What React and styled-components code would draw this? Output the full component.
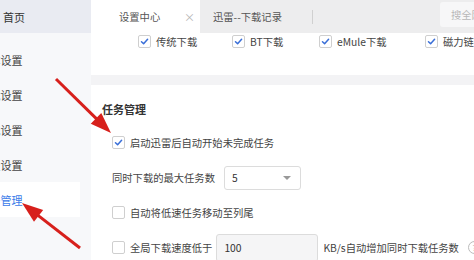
import React from 'react'
import styled, { createGlobalStyle } from 'styled-components'

const GlobalStyle = createGlobalStyle`
  html, body {
    margin: 0;
    padding: 0;
    width: 474px;
    height: 260px;
    overflow: hidden;
    background: #f3f3f5;
    font-family: "Noto Sans CJK SC", "Noto Sans", sans-serif;
  }
`

const Page = styled.div`
  position: relative;
  display: flex;
  width: 474px;
  height: 260px;
  overflow: hidden;
`

const Sidebar = styled.div`
  width: 91px;
  flex-shrink: 0;
  background: #f7f8fa;
  display: flex;
  flex-direction: column;
`

const HomeItem = styled.div`
  height: 33px;
  background: #e9ebf2;
  display: flex;
  align-items: center;
  padding-left: 3px;
  font-size: 11px;
  color: #333;
`

const NavList = styled.div`
  margin-top: 9px;
  display: flex;
  flex-direction: column;
`

const NavItem = styled.div`
  height: 35px;
  width: 80px;
  display: flex;
  align-items: center;
  overflow: hidden;
  background: ${({ active }) => (active ? '#ffffff' : 'transparent')};
  color: ${({ active }) => (active ? '#3b7be9' : '#444')};
  font-size: 11px;
  white-space: nowrap;

  span {
    margin-left: -21.5px;
  }
`

const Main = styled.div`
  flex: 1;
  display: flex;
  flex-direction: column;
  background: #f3f3f5;
`

const TabBar = styled.div`
  height: 33px;
  background: #ededee;
  display: flex;
  align-items: stretch;
  flex-shrink: 0;
`

const Tab = styled.div`
  display: flex;
  align-items: center;
  font-size: 10.3px;
  color: #555;
  background: ${({ active }) => (active ? '#ffffff' : 'transparent')};
  width: ${({ w }) => w}px;
  padding-left: ${({ pl }) => pl}px;
  box-sizing: border-box;
  position: relative;
`

const Close = styled.span`
  position: absolute;
  right: 5px;
  font-size: 11px;
  color: #b5b5b5;
`

const Divider = styled.div`
  width: 1px;
  height: 14px;
  background: #d0d0d0;
  align-self: center;
`

const Search = styled.div`
  margin-left: auto;
  margin-top: 2px;
  height: 25px;
  width: 30px;
  background: #f7f7f8;
  border-radius: 3px 0 0 3px;
  display: flex;
  align-items: center;
  padding-left: 11px;
  font-size: 10.3px;
  color: #b8b8b8;
  white-space: nowrap;
  overflow: hidden;
`

const TopCard = styled.div`
  background: #fff;
  height: 42px;
  flex-shrink: 0;
  position: relative;
`

const TypeOption = styled.label`
  display: flex;
  align-items: center;
  height: 12px;
  position: absolute;
  left: ${({ x }) => x - 91}px;
  top: 2px;
  font-size: 10.3px;
  color: #444;
  white-space: nowrap;
  gap: 5px;
`

const Card = styled.div`
  margin-top: 10px;
  background: #fff;
  flex: 1;
  padding: 17px 0 0 11px;
  box-sizing: border-box;
`

const Heading = styled.div`
  font-size: 11px;
  font-weight: 700;
  color: #333;
  height: 14px;
  line-height: 14px;
  margin-bottom: 9px;
`

const Row = styled.div`
  display: flex;
  align-items: center;
  height: 35px;
  padding-left: 10px;
  gap: 5px;
  font-size: 10.3px;
  color: #444;
  white-space: nowrap;
`

const Box = styled.span`
  width: 11px;
  height: 11px;
  border: 1px solid #cfcfcf;
  border-radius: 2px;
  background: #fff;
  display: inline-flex;
  align-items: center;
  justify-content: center;
  flex-shrink: 0;
`

const Select = styled.div`
  margin-left: 4px;
  width: 77px;
  height: 24px;
  border: 1px solid #dcdcdc;
  border-radius: 3px;
  box-sizing: border-box;
  display: flex;
  align-items: center;
  justify-content: space-between;
  padding: 0 9px 0 7px;
  color: #333;
`

const Caret = styled.span`
  width: 0;
  height: 0;
  border-left: 4px solid transparent;
  border-right: 4px solid transparent;
  border-top: 4px solid #999;
`

const Input = styled.div`
  margin-left: -1px;
  width: 102px;
  height: 28px;
  border: 1px solid #dcdcdc;
  border-radius: 3px;
  background: #f5f5f6;
  box-sizing: border-box;
  display: flex;
  align-items: center;
  padding-left: 7px;
  color: #333;
`

const Help = styled.span`
  margin-left: 4px;
  width: 11px;
  height: 11px;
  border: 1px solid #bbb;
  border-radius: 50%;
  font-size: 8px;
  color: #aaa;
  display: inline-flex;
  align-items: center;
  justify-content: center;
  flex-shrink: 0;
`

const Overlay = styled.svg`
  position: absolute;
  left: 0;
  top: 0;
  pointer-events: none;
`

function Check({ checked }) {
  return (
    <Box>
      {checked && (
        <svg width="9" height="9" viewBox="0 0 9 9">
          <path d="M1.5 4.8 L3.6 6.8 L7.6 2.2" fill="none" stroke="#3a6fd8" strokeWidth="1.5" strokeLinecap="round" strokeLinejoin="round" />
        </svg>
      )}
    </Box>
  )
}

// positions of the download type checkboxes, page x
const types = [
  { label: '传统下载', x: 138 },
  { label: 'BT下载', x: 232 },
  { label: 'eMule下载', x: 319 },
  { label: '磁力链接', x: 425 },
]

const navs = ['基本设置', '下载设置', '常规设置', '高级设置', '任务管理']

function Arrow({ x1, y1, x2, y2 }) {
  const dx = x2 - x1
  const dy = y2 - y1
  const len = Math.hypot(dx, dy)
  const ux = dx / len
  const uy = dy / len
  const bx = x2 - ux * 21
  const by = y2 - uy * 21
  const px = -uy * 7.5
  const py = ux * 7.5
  return (
    <g>
      <line x1={x1} y1={y1} x2={bx + ux * 4} y2={by + uy * 4} stroke="#d7201c" strokeWidth="3" />
      <polygon points={`${x2},${y2} ${bx + px},${by + py} ${bx - px},${by - py}`} fill="#d7201c" />
    </g>
  )
}

export default function App() {
  return (
    <>
      <GlobalStyle />
      <Page>
        <Sidebar>
          <HomeItem>首页</HomeItem>
          <NavList>
            {navs.map((n, i) => (
              <NavItem key={n} active={i === navs.length - 1}>
                <span>{n}</span>
              </NavItem>
            ))}
          </NavList>
        </Sidebar>

        <Main>
          <TabBar>
            <Tab active w={109} pl={28}>
              设置中心
              <Close>×</Close>
            </Tab>
            <Tab w={112} pl={13}>迅雷--下载记录</Tab>
            <Divider />
            <Search>搜全网</Search>
          </TabBar>

          <TopCard>
            {types.map((t) => (
              <TypeOption key={t.label} x={t.x}>
                <Check checked />
                {t.label}
              </TypeOption>
            ))}
          </TopCard>

          <Card>
            <Heading>任务管理</Heading>
            <Row>
              <Check checked />
              启动迅雷后自动开始未完成任务
            </Row>
            <Row>
              同时下载的最大任务数
              <Select>
                5
                <Caret />
              </Select>
            </Row>
            <Row>
              <Check />
              自动将低速任务移动至列尾
            </Row>
            <Row>
              <Check />
              全局下载速度低于
              <Input>100</Input>
              KB/s自动增加同时下载任务数
              <Help>?</Help>
            </Row>
          </Card>
        </Main>

        <Overlay width="474" height="260">
          <Arrow x1={56} y1={79} x2={111} y2={133} />
          <Arrow x1={80} y1={248} x2={22} y2={203} />
        </Overlay>
      </Page>
    </>
  )
}
